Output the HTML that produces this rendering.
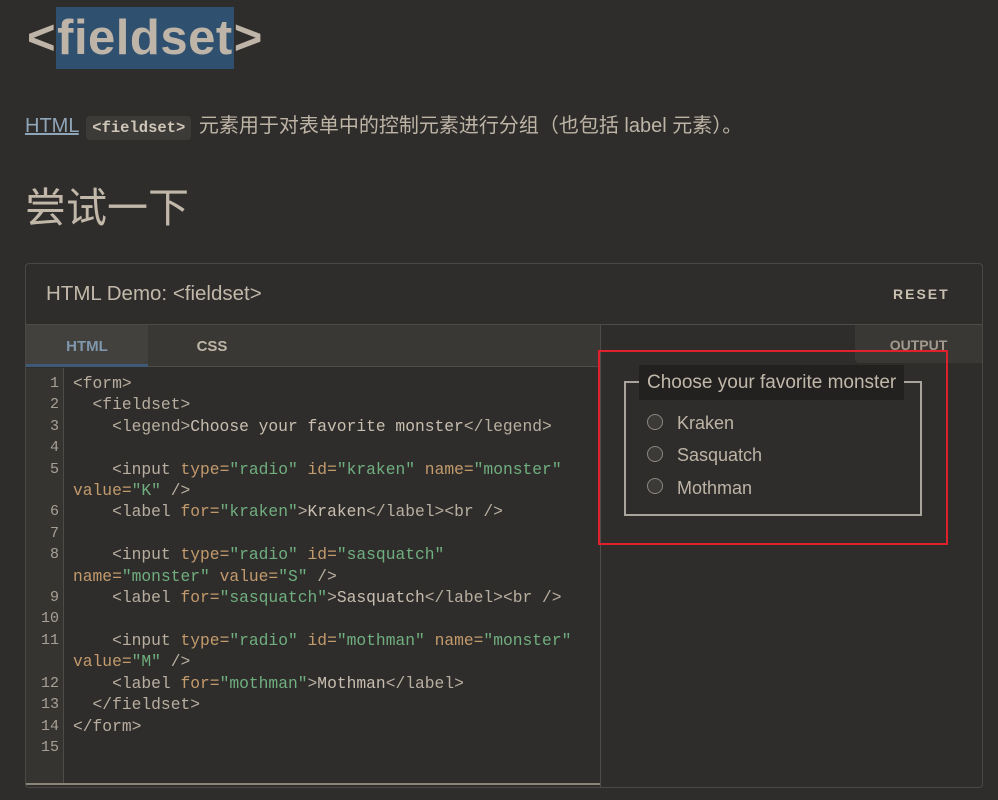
<!DOCTYPE html>
<html><head><meta charset="utf-8"><style>
*{box-sizing:border-box;margin:0;padding:0}
body{width:998px;height:800px;background:#2f2d2b;color:#c2b8aa;font-family:"Liberation Sans","Noto Sans CJK SC",sans-serif;position:relative;overflow:hidden}
.h1{position:absolute;left:27px;top:7px;font-size:49px;font-weight:bold;line-height:63px;color:#beb5a8;letter-spacing:0.5px}
.h1 .sel{background:#30506f;display:inline-block;height:62px;padding:0 1px}
.p{position:absolute;left:25px;top:113px;font-size:20px;line-height:26px;color:#bdb4a6}
.p a{color:#8fa5b8;text-decoration:underline}
.code{font-family:"Liberation Mono",monospace;font-weight:bold;font-size:15.5px;background:#3d3b38;border-radius:4px;padding:3px 6px;color:#cfc6b8;margin:0 2px}
.h2{position:absolute;left:25px;top:181px;font-size:41px;line-height:54px;color:#c2b8aa}
.box{position:absolute;left:25px;top:263px;width:958px;height:525px;border:1px solid #4a4845;border-radius:4px}
.hdr{position:absolute;left:46px;top:282px;font-size:20.5px;color:#c2b8aa}
.reset{position:absolute;left:893px;top:286px;font-size:14px;font-weight:bold;letter-spacing:2px;color:#c9bfb1}
.hl{position:absolute;left:26px;top:324px;width:956px;border-top:1px solid #4e4c49}
.tabs{position:absolute;left:26px;top:325px;width:574px;height:42px;background:#3a3835;border-bottom:1px solid #4e4c49}
.tab{position:absolute;top:0;height:42px;line-height:44px;font-size:15px;font-weight:bold;text-align:center}
.t1{left:0;width:122px;background:#43413e;color:#7f97ad;border-bottom:3px solid #3f5a77}
.t2{left:122px;width:128px;color:#beb5a8}
.out{position:absolute;left:855px;top:325px;width:127px;height:38px;background:#3a3835;border-radius:0 0 0 4px;font-size:14px;font-weight:bold;color:#a39a8e;line-height:40px;text-align:center}
.vl{position:absolute;left:600px;top:325px;height:462px;border-left:1px solid #4e4c49}
.gut{position:absolute;left:26px;top:368px;width:38px;height:416px;background:#363431;border-right:1px solid #4e4c49}
.lines{position:absolute;left:26px;top:373px;width:33px;text-align:right;font-family:"Liberation Mono",monospace;font-size:15px;line-height:21.4px;color:#a8a095}
.src{position:absolute;left:73px;top:373px;font-family:"Liberation Mono",monospace;font-size:16.3px;line-height:21.4px;color:#b8aea0;white-space:pre}
.a{color:#c29a6c}.v{color:#6fae7f}.t{color:#c8beb0}
.bot{position:absolute;left:26px;top:783px;width:574px;border-top:2px solid #8a847b}
.red{position:absolute;left:598px;top:350px;width:350px;height:195px;border:2px solid #e0202a}
.fs{position:absolute;left:624px;top:381px;width:298px;height:135px;border:2px solid #a9a49c}
.lg{position:absolute;left:639px;top:365px;background:#222120;padding:0 8px;height:35px;line-height:35px;font-size:19px;color:#c2b8aa}
.r{position:absolute;left:647px;width:16px;height:16px;border:1px solid #8b867f;border-radius:50%;background:#3c3a37}
.rl{position:absolute;left:677px;font-size:18px;color:#bdb4a6}
</style></head><body>
<div class="h1">&lt;<span class="sel">fieldset</span>&gt;</div>
<div class="p"><a>HTML</a> <span class="code">&lt;fieldset&gt;</span> 元素用于对表单中的控制元素进行分组（也包括 label 元素）。</div>
<div class="h2">尝试一下</div>
<div class="box"></div>
<div class="hdr">HTML Demo: &lt;fieldset&gt;</div>
<div class="reset">RESET</div>
<div class="hl"></div>
<div class="tabs"><div class="tab t1">HTML</div><div class="tab t2">CSS</div></div>
<div class="out">OUTPUT</div>
<div class="vl"></div>
<div class="gut"></div>
<div class="lines">1<br>2<br>3<br>4<br>5<br>&nbsp;<br>6<br>7<br>8<br>&nbsp;<br>9<br>10<br>11<br>&nbsp;<br>12<br>13<br>14<br>15</div>
<div class="src">&lt;form&gt;
  &lt;fieldset&gt;
    &lt;legend&gt;<span class="t">Choose your favorite monster</span>&lt;/legend&gt;

    &lt;input <span class="a">type=</span><span class="v">"radio"</span> <span class="a">id=</span><span class="v">"kraken"</span> <span class="a">name=</span><span class="v">"monster"</span>
<span class="a">value=</span><span class="v">"K"</span> /&gt;
    &lt;label <span class="a">for=</span><span class="v">"kraken"</span>&gt;<span class="t">Kraken</span>&lt;/label&gt;&lt;br /&gt;

    &lt;input <span class="a">type=</span><span class="v">"radio"</span> <span class="a">id=</span><span class="v">"sasquatch"</span>
<span class="a">name=</span><span class="v">"monster"</span> <span class="a">value=</span><span class="v">"S"</span> /&gt;
    &lt;label <span class="a">for=</span><span class="v">"sasquatch"</span>&gt;<span class="t">Sasquatch</span>&lt;/label&gt;&lt;br /&gt;

    &lt;input <span class="a">type=</span><span class="v">"radio"</span> <span class="a">id=</span><span class="v">"mothman"</span> <span class="a">name=</span><span class="v">"monster"</span>
<span class="a">value=</span><span class="v">"M"</span> /&gt;
    &lt;label <span class="a">for=</span><span class="v">"mothman"</span>&gt;<span class="t">Mothman</span>&lt;/label&gt;
  &lt;/fieldset&gt;
&lt;/form&gt;
</div>
<div class="bot"></div>
<div class="fs"></div>
<div class="lg">Choose your favorite monster</div>
<div class="r" style="top:414px"></div><div class="rl" style="top:413px">Kraken</div>
<div class="r" style="top:446px"></div><div class="rl" style="top:445px">Sasquatch</div>
<div class="r" style="top:478px"></div><div class="rl" style="top:478px">Mothman</div>
<div class="red"></div>
</body></html>
